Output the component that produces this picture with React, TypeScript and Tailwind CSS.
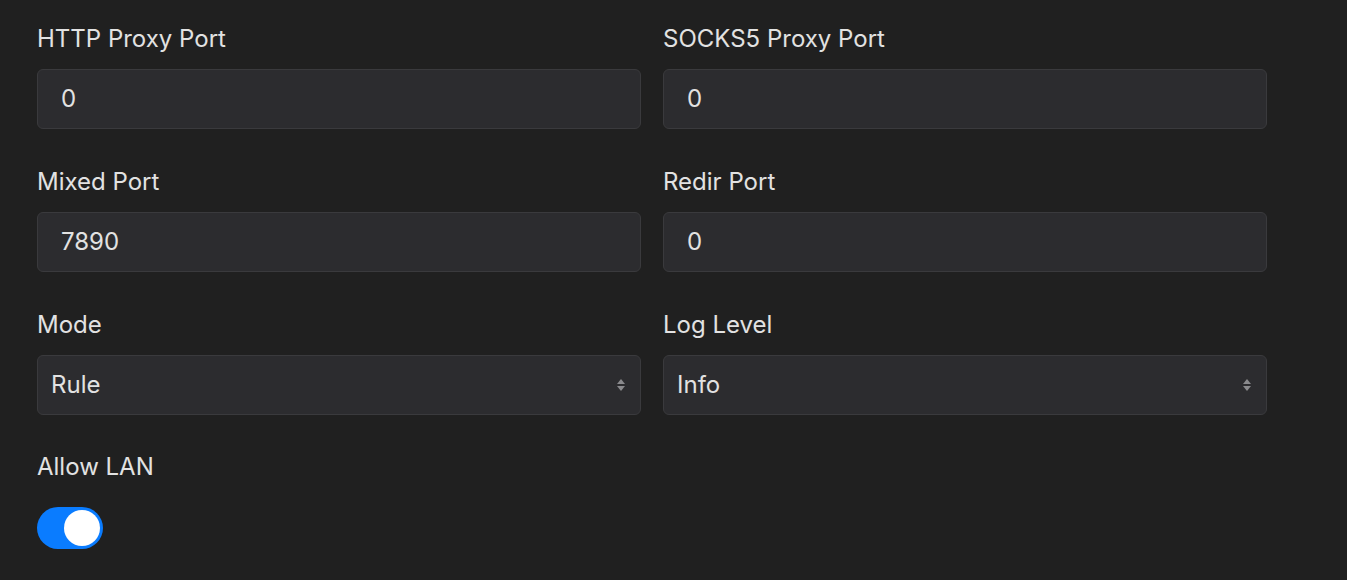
import React from "react";

const font = { fontFamily: "Inter, 'Noto Sans', sans-serif" };

function Field({ label, children }: { label: string; children: React.ReactNode }) {
  return (
    <div className="flex flex-col">
      <div className="h-[30px] leading-[30px] text-[24px] text-[#e2e2e2] mb-[15px]">{label}</div>
      {children}
    </div>
  );
}

function Input({ value }: { value: string }) {
  return (
    <div className="h-[60px] rounded-[6px] border border-[#3a3a3d] bg-[#2c2c2f] flex items-center pl-[23px] text-[24px] text-[#e2e2e2]">
      {value}
    </div>
  );
}

function Select({ value }: { value: string }) {
  return (
    <div className="h-[60px] rounded-[6px] border border-[#3a3a3d] bg-[#2c2c2f] flex items-center pl-[13px] pr-[14px] text-[24px] text-[#e2e2e2]">
      <span className="flex-1">{value}</span>
      <svg width="10" height="16" viewBox="0 0 10 16">
        <path d="M5 2 L9 7 L1 7 Z" fill="#8a8a8d" />
        <path d="M5 14 L9 9 L1 9 Z" fill="#8a8a8d" />
      </svg>
    </div>
  );
}

export default function App() {
  return (
    <div className="min-h-[580px] bg-[#202020] pt-[24px] pl-[37px]" style={font}>
      <div className="w-[1230px] grid grid-cols-2 gap-x-[22px] gap-y-[38px]">
        <Field label="HTTP Proxy Port"><Input value="0" /></Field>
        <Field label="SOCKS5 Proxy Port"><Input value="0" /></Field>
        <Field label="Mixed Port"><Input value="7890" /></Field>
        <Field label="Redir Port"><Input value="0" /></Field>
        <Field label="Mode"><Select value="Rule" /></Field>
        <Field label="Log Level"><Select value="Info" /></Field>
      </div>
      <div className="mt-[37px] h-[30px] leading-[30px] text-[24px] text-[#e2e2e2]">Allow LAN</div>
      <div className="mt-[25px] w-[66px] h-[42px] rounded-full bg-[#0a7cff] flex items-center justify-end pr-[3px]">
        <div className="w-[36px] h-[36px] rounded-full bg-white" />
      </div>
    </div>
  );
}
